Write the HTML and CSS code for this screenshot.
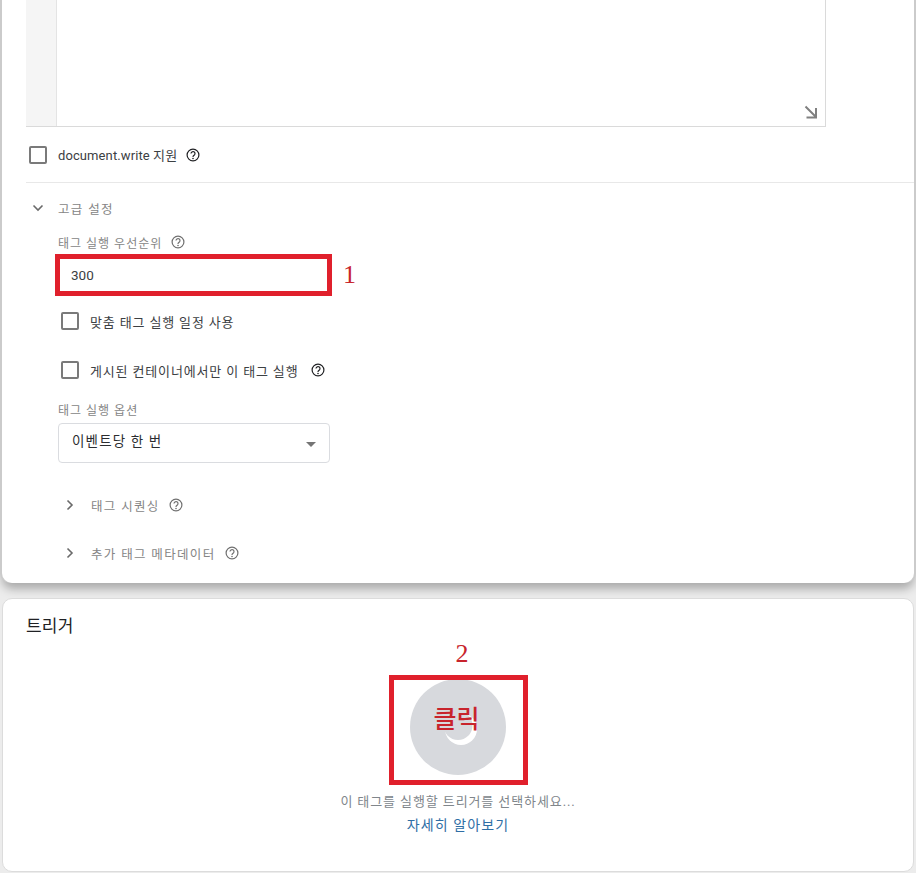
FILE: index.html
```html
<!DOCTYPE html>
<html lang="ko">
<head>
  <meta charset="UTF-8" />
  <title>태그 설정</title>
  <link rel="stylesheet" href="styles.css">
</head>
<body>
  <section class="card card-tag">
    <div class="editor">
      <div class="gutter"></div>
      <svg class="resize" viewBox="0 0 14 14" width="14" height="14"><path d="M1.5 1.5 L11.5 11.5 M12 3 V12.5 H2.5" fill="none" stroke="#808080" stroke-width="2"/></svg>
    </div>
    <div class="check-row doc-write">
      <span class="box"></span>
      <span class="dark-label">document.write 지원</span>
      <svg class="help help-dark" viewBox="0 0 14 14"><use href="#q"/></svg>
    </div>
    <div class="divider"></div>
    <div class="advanced">
      <div class="adv-head">
        <svg class="chev" viewBox="0 0 12 12"><path d="M1.5 3.5 L6 8 L10.5 3.5" fill="none" stroke="#6a6a6a" stroke-width="1.6"/></svg>
        <span class="muted">고급 설정</span>
      </div>
      <div class="field-label first">
        <span>태그 실행 우선순위</span>
        <svg class="help" viewBox="0 0 14 14"><use href="#q"/></svg>
      </div>
      <div class="priority">
        <span class="priority-value">300</span>
        <span class="red-box"></span>
        <span class="red-num num-1">1</span>
      </div>
      <div class="check-row opt opt-1">
        <span class="box"></span>
        <span class="dark-label spaced">맞춤 태그 실행 일정 사용</span>
      </div>
      <div class="check-row opt opt-2">
        <span class="box"></span>
        <span class="dark-label spaced">게시된 컨테이너에서만 이 태그 실행</span>
        <svg class="help help-dark gap-wide" viewBox="0 0 14 14"><use href="#q"/></svg>
      </div>
      <div class="field-label second"><span>태그 실행 옵션</span></div>
      <div class="select">
        <span class="select-value">이벤트당 한 번</span>
        <span class="caret"></span>
      </div>
      <div class="expand exp-1">
        <svg class="chev" viewBox="0 0 12 12"><path d="M3.5 1.5 L8 6 L3.5 10.5" fill="none" stroke="#6a6a6a" stroke-width="1.6"/></svg>
        <span class="muted">태그 시퀀싱</span>
        <svg class="help" viewBox="0 0 14 14"><use href="#q"/></svg>
      </div>
      <div class="expand exp-2">
        <svg class="chev" viewBox="0 0 12 12"><path d="M3.5 1.5 L8 6 L3.5 10.5" fill="none" stroke="#6a6a6a" stroke-width="1.6"/></svg>
        <span class="muted">추가 태그 메타데이터</span>
        <svg class="help" viewBox="0 0 14 14"><use href="#q"/></svg>
      </div>
    </div>
  </section>

  <section class="card card-trigger">
    <h2 class="trigger-title">트리거</h2>
    <div class="trigger-body">
      <div class="circle-wrap">
        <div class="circle">
          <svg class="spinner" viewBox="0 0 34 34" width="34" height="34">
            <circle cx="17" cy="17" r="16" fill="#fff"/>
            <circle cx="14" cy="13.5" r="14.5" fill="#d7d9dd"/>
          </svg>
        </div>
        <span class="red-box"></span>
        <span class="red-num num-2">2</span>
        <span class="click-text">클릭</span>
      </div>
      <p class="hint">이 태그를 실행할 트리거를 선택하세요...</p>
      <a class="learn">자세히 알아보기</a>
    </div>
  </section>

  <svg class="defs" width="0" height="0">
    <symbol id="q" viewBox="0 0 14 14">
      <circle cx="7" cy="7" r="5.9" fill="none" stroke="currentColor" stroke-width="1.2"/>
      <path d="M5 5.6 A2 2 0 1 1 8.2 7.2 C7.4 7.8 7 8 7 9" fill="none" stroke="currentColor" stroke-width="1.2"/>
      <circle cx="7" cy="10.5" r="0.8" fill="currentColor"/>
    </symbol>
  </svg>
</body>
</html>
```

FILE: styles.css
```css
* { box-sizing: border-box; margin: 0; padding: 0; }

html, body {
  width: 916px;
  height: 873px;
  overflow: hidden;
}

body {
  background: #ececec;
  padding: 0 2px;
  font-family: Roboto, "Noto Sans CJK KR", sans-serif;
  font-size: 12px;
  color: #3c4043;
}

.defs { position: absolute; }

/* CARDS */
.card { background: #fff; }

.card-tag {
  height: 583px;
  border-radius: 0 0 10px 10px;
  box-shadow: -2px 0 0 #cbcbcb, 2px 0 0 #cbcbcb, 0 6px 10px rgba(0, 0, 0, 0.28);
  padding-left: 24px;
}

.card-trigger {
  height: 274px;
  margin-top: 15px;
  border-radius: 10px;
  border: 1px solid #dcdcdc;
}

/* CODE EDITOR */
.editor {
  position: relative;
  width: 800px;
  height: 127px;
  border: 1px solid #dadada;
  border-top: 0;
  border-left: 0;
}

.gutter {
  width: 31px;
  height: 100%;
  background: #f5f5f5;
  border-right: 1px solid #e4e4e4;
}

.resize {
  position: absolute;
  right: 7px;
  bottom: 7px;
}

/* CHECKBOX ROWS */
.check-row {
  display: flex;
  align-items: center;
}

.box {
  width: 18px;
  height: 18px;
  border: 2px solid #7a7a7a;
  border-radius: 2px;
  flex: none;
}

.dark-label {
  color: #3c4043;
  font-size: 13px;
  letter-spacing: 0.1px;
  margin-left: 11px;
}

.dark-label.spaced { letter-spacing: 0.85px; }

.doc-write {
  height: 55px;
  padding-left: 3px;
}

.help {
  width: 14px;
  height: 14px;
  margin-left: 9px;
  color: #707070;
  flex: none;
}

.help-dark { color: #202124; }
.gap-wide { margin-left: 13px; }

.divider {
  height: 1px;
  background: #e8e8e8;
}

/* ADVANCED SETTINGS */
.advanced { padding-left: 6px; }

.adv-head {
  display: flex;
  align-items: center;
  height: 18px;
  margin-top: 16px;
}

.chev {
  width: 12px;
  height: 12px;
  flex: none;
}

.muted {
  color: #858585;
  font-size: 12.5px;
  letter-spacing: 1.35px;
}

.adv-head .muted { margin-left: 14px; }

.field-label {
  display: flex;
  align-items: center;
  height: 16px;
  margin-left: 26px;
  color: #858585;
  font-size: 12px;
  letter-spacing: 1px;
}

.field-label.first { margin-top: 17px; }
.field-label.second { margin-top: 22px; }

/* PRIORITY INPUT */
.priority {
  position: relative;
  display: flex;
  align-items: center;
  width: 277px;
  height: 42px;
  margin: 4px 0 0 23px;
  padding-left: 16px;
}

.priority-value {
  font-size: 13.5px;
  color: #3c4043;
}

.red-box {
  position: absolute;
  inset: 0;
  border: 5px solid #e0202c;
}

.red-num {
  position: absolute;
  font-family: "Liberation Serif", serif;
  font-size: 26px;
  line-height: 28px;
  color: #c8242c;
}

.num-1 { left: 288px; top: 7px; }
.num-2 { left: 67px; top: -35px; }

.opt { margin-left: 29px; }
.opt-1 { height: 18px; margin-top: 16px; }
.opt-2 { height: 18px; margin-top: 31px; }

/* SELECT */
.select {
  display: flex;
  align-items: center;
  justify-content: space-between;
  width: 272px;
  height: 40px;
  margin: 6px 0 0 26px;
  padding: 0 13px;
  border: 1px solid #dadce0;
  border-radius: 4px;
  font-size: 13.5px;
  letter-spacing: 1.15px;
  color: #2b2d30;
}

.select-value { margin-bottom: 6px; }

.caret {
  width: 0;
  height: 0;
  border-left: 5px solid transparent;
  border-right: 5px solid transparent;
  border-top: 5px solid #757575;
  margin-top: 2px;
}

/* EXPANDABLE ROWS */
.expand {
  display: flex;
  align-items: center;
  height: 18px;
  margin-left: 32px;
}

.exp-1 { margin-top: 33px; }
.exp-2 { margin-top: 30px; }
.expand .muted { margin-left: 15px; }

/* TRIGGER CARD */
.trigger-title {
  font-size: 17px;
  font-weight: 400;
  letter-spacing: 0.2px;
  color: #202124;
  line-height: 20px;
  padding: 17px 0 0 23px;
}

.trigger-body {
  display: flex;
  flex-direction: column;
  align-items: center;
  margin-top: 39px;
}

.circle-wrap {
  position: relative;
  display: flex;
  align-items: center;
  justify-content: center;
  width: 139px;
  height: 110px;
}

.circle {
  display: flex;
  align-items: center;
  justify-content: center;
  width: 96px;
  height: 96px;
  margin-bottom: 6px;
  border-radius: 50%;
  background: #d7d9dd;
}

.spinner { margin: 4px 0 0 6px; }

.click-text {
  position: absolute;
  left: 45px;
  top: 27px;
  font-size: 25px;
  font-weight: 500;
  line-height: 30px;
  font-family: "Noto Sans CJK KR", sans-serif;
  color: #c8242c;
}

.hint {
  margin-top: 6px;
  font-size: 13px;
  letter-spacing: 0.9px;
  color: #80868b;
}

.learn {
  margin-top: 4px;
  font-size: 14px;
  letter-spacing: 1.1px;
  color: #2f6ea5;
}
```
